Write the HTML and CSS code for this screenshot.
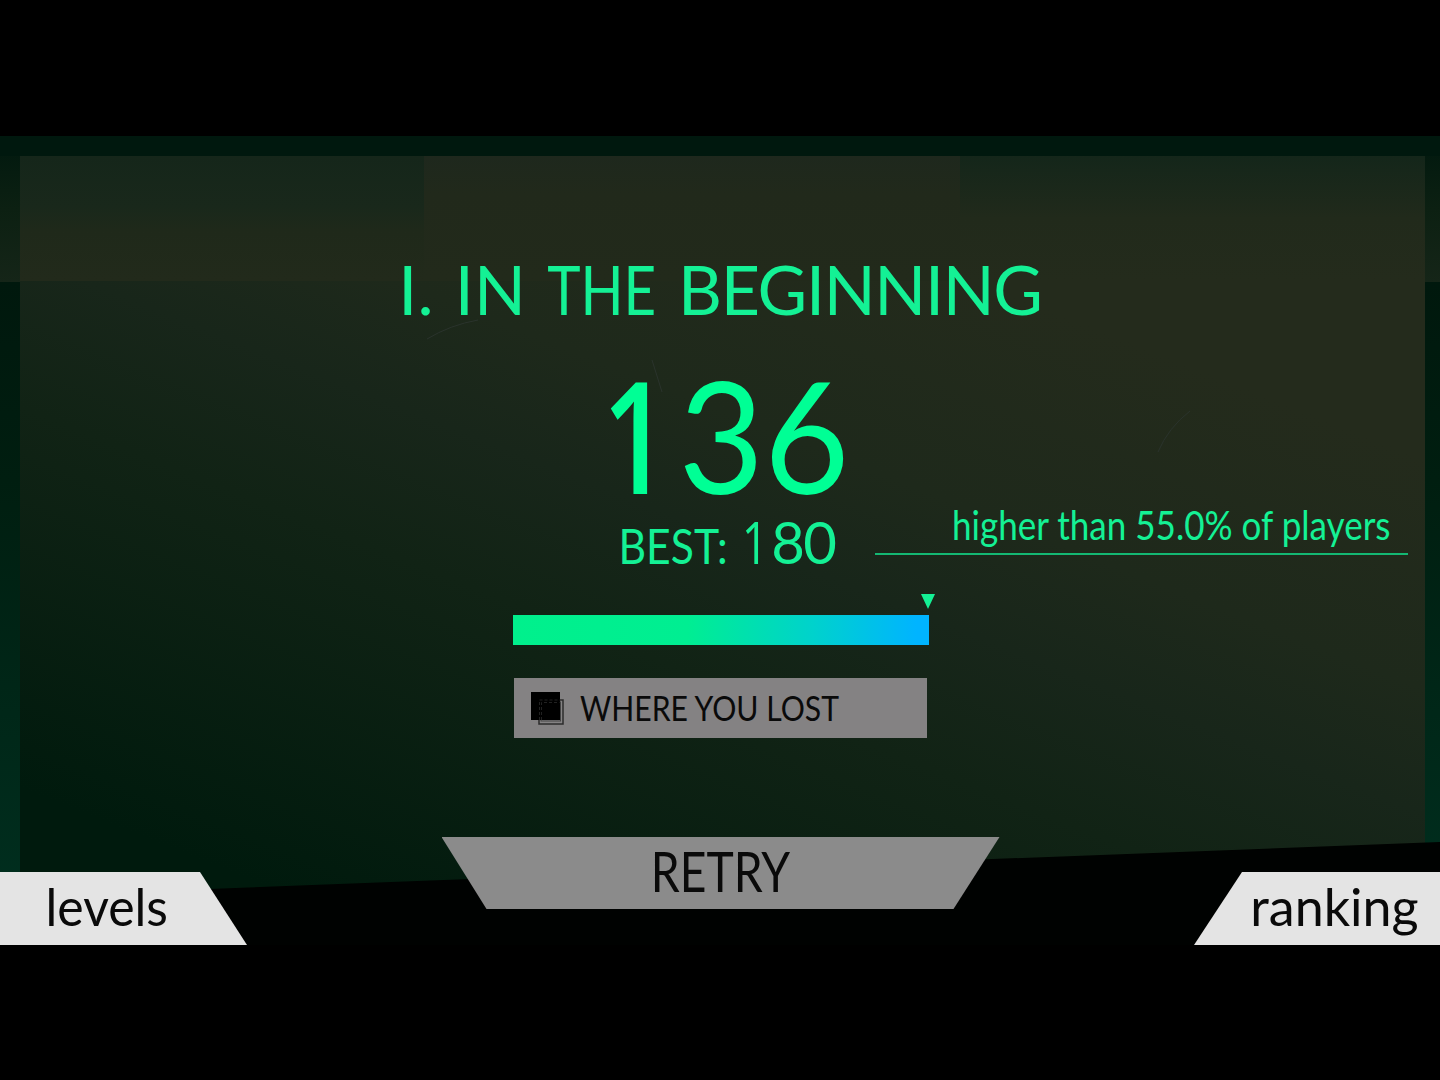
FILE: index.html
```html
<!DOCTYPE html>
<html lang="en">
<head>
    <meta charset="UTF-8">
    <meta name="viewport" content="width=device-width, initial-scale=1.0">
    <title>I. In the Beginning</title>
    <link rel="stylesheet" href="styles.css">
</head>
<body>
    <div class="screen">
        <!-- Room behind the results -->
        <svg class="backdrop" viewBox="0 136 1440 809" preserveAspectRatio="none" aria-hidden="true">
            <defs>
                <linearGradient id="wall" gradientUnits="userSpaceOnUse" x1="200" y1="860" x2="505" y2="93">
                    <stop offset="0" stop-color="#001a0d"/>
                    <stop offset="0.43" stop-color="#112315"/>
                    <stop offset="0.6" stop-color="#18261a"/>
                    <stop offset="0.74" stop-color="#1e291b"/>
                    <stop offset="1" stop-color="#242b1c"/>
                </linearGradient>
                <linearGradient id="side" x1="0" y1="0" x2="0" y2="1">
                    <stop offset="0" stop-color="#00180d"/>
                    <stop offset="0.3" stop-color="#001e10"/>
                    <stop offset="1" stop-color="#003020"/>
                </linearGradient>
                <linearGradient id="side-top" x1="0" y1="0" x2="0" y2="1">
                    <stop offset="0" stop-color="#00180e"/>
                    <stop offset="0.5" stop-color="#0c2012"/>
                    <stop offset="1" stop-color="#152518"/>
                </linearGradient>
                <linearGradient id="band" x1="0" y1="0" x2="0" y2="1">
                    <stop offset="0" stop-color="#15261a"/>
                    <stop offset="0.4" stop-color="#19281b"/>
                    <stop offset="0.6" stop-color="#1f291a"/>
                    <stop offset="1" stop-color="#222a1b"/>
                </linearGradient>
                <linearGradient id="band-right" x1="0" y1="0" x2="0" y2="1">
                    <stop offset="0" stop-color="#14261a"/>
                    <stop offset="0.5" stop-color="#212a1b"/>
                    <stop offset="1" stop-color="#242b1c"/>
                </linearGradient>
                <linearGradient id="block" x1="0" y1="0" x2="0" y2="1">
                    <stop offset="0" stop-color="#1e281d"/>
                    <stop offset="0.3" stop-color="#21291b"/>
                    <stop offset="1" stop-color="#222a1b"/>
                </linearGradient>
            </defs>
            <rect x="0" y="281" width="1440" height="664" fill="url(#side)"/>
            <rect x="0" y="136" width="1440" height="146" fill="url(#side-top)"/>
            <rect x="0" y="136" width="1440" height="20" fill="#00180e"/>
            <rect x="20" y="156" width="1405" height="789" fill="url(#wall)"/>
            <rect x="20" y="156" width="404" height="125" fill="url(#band)"/>
            <rect x="424" y="156" width="536" height="125" fill="url(#block)"/>
            <rect x="960" y="156" width="465" height="125" fill="url(#band-right)"/>
            <path d="M427 339Q450 325 478 320M652 360L662 392M1158 452Q1168 428 1190 411" fill="none" stroke="#2a332c" stroke-width="1"/>
            <path d="M0 897L1440 842V945H0Z" fill="#000201"/>
        </svg>

        <main class="results">
            <h1 class="title">I. IN <span class="the">THE</span> <span class="beginning">BEGINNING</span></h1>
            <div class="score"><span class="one">1</span>36</div>
            <div class="best-row">
                <div class="best"><span class="best-label">BEST:</span> <span class="best-value"><span class="one">1</span>80</span></div>
                <div class="note"><span>higher than 55.0% of players</span></div>
            </div>
            <div class="progress">
                <svg class="marker" viewBox="0 0 14 15"><path d="M0 0H14L7 15Z"/></svg>
                <div class="bar"></div>
            </div>
            <button class="lost-btn">
                <svg class="lost-icon" viewBox="0 0 33 33">
                    <rect x="8" y="8" width="24" height="24" fill="none" stroke="#2c2c2c" stroke-width="1.5"/>
                    <rect x="10" y="10" width="19.5" height="19" fill="none" stroke="#444" stroke-width="1"/>
                    <rect x="0" y="0" width="29" height="28" fill="#000"/>
                    <path d="M8.5 28V8H29M10.5 28V10.5H28.5" fill="none" stroke="#2a2a2a" stroke-width="0.8" stroke-dasharray="3 2"/>
                </svg>
                <span class="lost-label">WHERE YOU LOST</span>
            </button>
        </main>

        <nav class="menu">
            <button class="menu-btn levels"><span>levels</span></button>
            <button class="menu-btn retry"><span>RETRY</span></button>
            <button class="menu-btn ranking"><span>ranking</span></button>
        </nav>
    </div>
</body>
</html>
```
FILE: styles.css
```css
* {
    margin: 0;
    padding: 0;
    box-sizing: border-box;
}

body {
    font-family: Lato, "Open Sans", sans-serif;
    background: #000;
    min-height: 100vh;
    padding-top: 136px;
    overflow: hidden;
}

.screen {
    position: relative;
    height: 809px;
    display: flex;
    flex-direction: column;
    justify-content: space-between;
    color: #14f195;
}

.backdrop {
    position: absolute;
    inset: 0;
    width: 100%;
    height: 100%;
}

.results, .menu {
    position: relative;
}

.results {
    display: flex;
    flex-direction: column;
    align-items: center;
    padding-top: 117px;
}

.title, .score, .best, .note, .lost-label, .menu-btn span {
    white-space: nowrap;
}

.title {
    font-size: 68px;
    font-weight: 400;
    line-height: 72px;
    word-spacing: 4px;
}

.the {
    display: inline-block;
    margin: 0 -11px;
    transform: scaleX(0.83);
}

.beginning {
    letter-spacing: -1.3px;
}

.one {
    display: inline-block;
    font-family: "Open Sans", sans-serif;
    font-weight: 500;
    line-height: 0.5;
    transform: translateX(-0.04em) scaleX(0.8);
    transform-origin: 80% 50%;
}

.score {
    height: 140px;
    margin-top: 39px;
    padding-left: 4px;
    font-size: 156px;
    line-height: 140px;
    color: #00ff95;
    transform: scaleX(0.945);
}

.score .one {
    font-weight: 600;
}

.best-row {
    margin-top: 8px;
    width: 100%;
    height: 60px;
    display: grid;
    grid-template-columns: 1fr auto 1fr;
}

.best {
    grid-column: 2;
    font-size: 48px;
    line-height: 60px;
}

.best-label {
    display: inline-block;
    line-height: 1;
    transform: scaleX(0.89);
    transform-origin: right;
}

.best-value {
    font-size: 58px;
    letter-spacing: -1.5px;
}

.note {
    justify-self: end;
    width: 533px;
    height: 43px;
    margin-right: 32px;
    padding-left: 77px;
    font-size: 40px;
    line-height: 26px;
    border-bottom: 2px solid #14b873;
}

.note span {
    display: inline-block;
    transform: scaleX(0.876);
    transform-origin: left;
}

.progress {
    width: 416px;
    margin: 22px 0 0 2px;
}

.marker {
    display: block;
    width: 14px;
    height: 15px;
    margin: 0 -6px 6px auto;
    fill: #14f195;
}

.bar {
    height: 30px;
    background: linear-gradient(to right, #00f08c 0%, #00ee92 42%, #00d2cc 72%, #00b4ff 97%);
}

button {
    border: none;
    font-family: inherit;
    color: #0a0a0a;
    cursor: pointer;
}

.lost-btn {
    width: 413px;
    height: 60px;
    margin-top: 33px;
    padding-left: 17px;
    display: flex;
    align-items: center;
    gap: 16px;
    font-size: 34px;
    background: #848283;
}

.lost-icon {
    width: 33px;
    height: 33px;
}

.lost-label {
    padding-bottom: 1px;
    transform: scaleX(0.887);
    transform-origin: left;
}

.menu {
    display: flex;
    justify-content: space-between;
    align-items: flex-end;
    height: 108px;
}

.menu-btn {
    height: 73px;
    padding-bottom: 6px;
    font-size: 52px;
    background: #e4e4e4;
}

.menu-btn span {
    display: inline-block;
}

.levels {
    width: 247px;
    padding-right: 34px;
    clip-path: polygon(0 0, 200px 0, 100% 100%, 0 100%);
}

.levels span {
    transform: scaleX(0.96);
}

.retry {
    width: 558px;
    height: 72px;
    align-self: flex-start;
    font-size: 56px;
    background: #8b8b8b;
    clip-path: polygon(0 0, 100% 0, 512px 100%, 45px 100%);
}

.retry span {
    transform: scaleX(0.825);
}

.ranking {
    width: 246px;
    padding-left: 35px;
    clip-path: polygon(48px 0, 100% 0, 100% 100%, 0 100%);
}
```
